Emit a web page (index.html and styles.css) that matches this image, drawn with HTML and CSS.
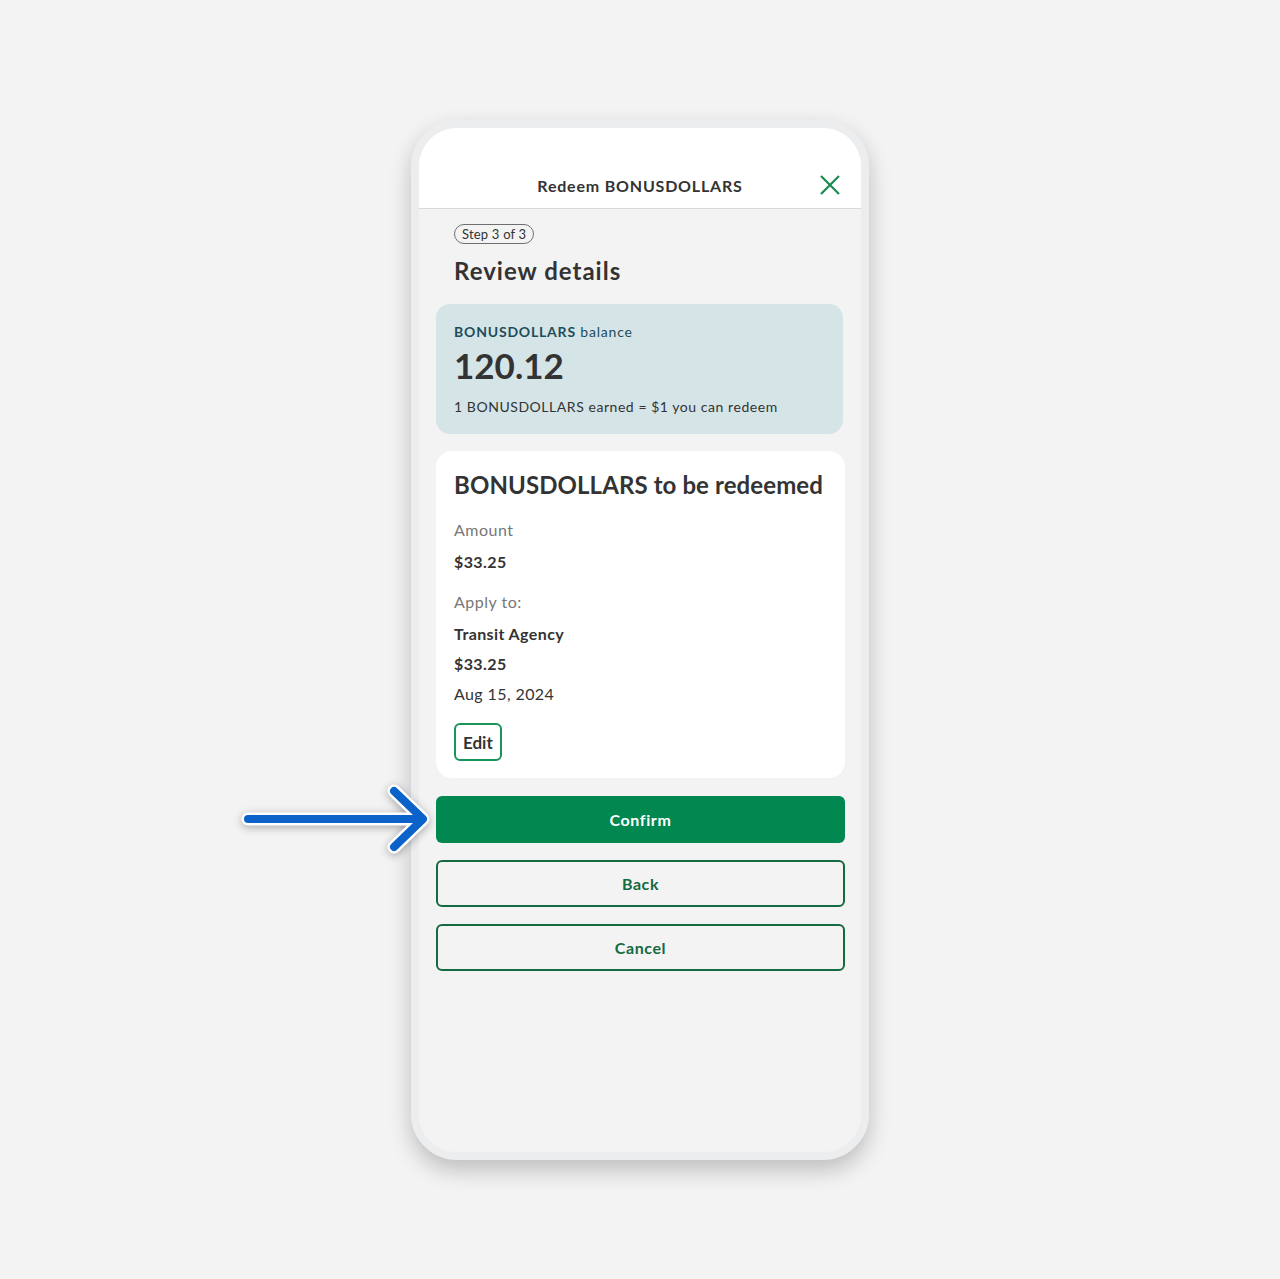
FILE: index.html
```html
<!DOCTYPE html>
<html lang="en">
<head>
    <meta charset="UTF-8">
    <meta name="viewport" content="width=device-width, initial-scale=1.0">
    <title>Redeem BONUSDOLLARS</title>
    <link rel="stylesheet" href="styles.css">
</head>
<body>

<div class="stage">
    <div class="phone">
        <div class="screen">
            <!-- Header -->
            <div class="header">
                <span class="header-title">Redeem BONUSDOLLARS</span>
                <svg class="close" width="22" height="22" viewBox="0 0 22 22">
                    <path d="M2 2 L20 20 M20 2 L2 20" stroke="#1a8a50" stroke-width="2.2" fill="none"/>
                </svg>
            </div>

            <div class="content">
                <div class="step">Step 3 of 3</div>
                <h1 class="title">Review details</h1>

                <!-- Balance -->
                <div class="balance">
                    <div class="balance-label"><b>BONUSDOLLARS</b> balance</div>
                    <div class="balance-value">120.12</div>
                    <div class="balance-note">1 BONUSDOLLARS earned = $1 you can redeem</div>
                </div>

                <!-- Details -->
                <div class="card">
                    <h2 class="card-title">BONUSDOLLARS to be redeemed</h2>
                    <div class="label">Amount</div>
                    <div class="value strong">$33.25</div>
                    <div class="label">Apply to:</div>
                    <div class="value strong">Transit Agency</div>
                    <div class="value strong">$33.25</div>
                    <div class="value">Aug 15, 2024</div>
                    <button class="edit">Edit</button>
                </div>

                <button class="btn btn-primary">Confirm</button>
                <button class="btn btn-outline">Back</button>
                <button class="btn btn-outline">Cancel</button>
            </div>
        </div>

        <!-- Pointer arrow -->
        <svg class="pointer" width="195" height="76" viewBox="0 0 195 76">
            <g fill="none" stroke-linecap="round" stroke-linejoin="round">
                <path d="M8 38 H182 M154 10 L183 38 L154 66" stroke="#ffffff" stroke-width="13"/>
                <path d="M8 38 H182 M154 10 L183 38 L154 66" stroke="#0b62c9" stroke-width="8"/>
            </g>
        </svg>
    </div>
</div>

</body>
</html>
```

FILE: styles.css
```css
body {
    margin: 0;
    background-color: #f3f3f3;
    font-family: Lato, "Open Sans", sans-serif;
    color: #333333;
}
.stage {
    display: flex;
    justify-content: center;
    padding-top: 120px;
    padding-bottom: 119px;
}
.phone {
    position: relative;
    width: 442px;
    height: 1024px;
    border: 8px solid #ecedef;
    border-radius: 46px;
    background-color: #f3f3f3;
    box-shadow: 0 10px 22px rgba(0, 0, 0, 0.22);
}
.screen {
    height: 100%;
    border-radius: 38px;
    overflow: hidden;
    background-color: #f3f3f3;
}
.header {
    height: 80px;
    background-color: #ffffff;
    border-bottom: 1px solid #dadada;
    display: flex;
    align-items: flex-end;
    justify-content: center;
    position: relative;
}
.header-title {
    font-size: 16px;
    font-weight: 700;
    line-height: 20px;
    margin-bottom: 12px;
    letter-spacing: 0.8px;
}
.close {
    position: absolute;
    right: 20px;
    bottom: 12px;
}
.content {
    padding: 15px 16px 0 17px;
    display: flex;
    flex-direction: column;
    align-items: stretch;
}
.step {
    align-self: flex-start;
    margin-left: 18px;
    border: 1px solid #6f6f6f;
    border-radius: 11px;
    padding: 0 7px;
    font-size: 13px;
    line-height: 18px;
    letter-spacing: 0.2px;
}
.title {
    margin: 12px 0 0 18px;
    font-size: 24px;
    line-height: 30px;
    font-weight: 700;
    letter-spacing: 1px;
}
.balance {
    margin-top: 18px;
    margin-right: 2px;
    background-color: #d5e4e7;
    border-radius: 14px;
    padding: 19px 18px 18px;
}
.balance-label {
    font-size: 14px;
    line-height: 18px;
    color: #1d4d5b;
    letter-spacing: 0.8px;
}
.balance-value {
    font-size: 35px;
    font-weight: 700;
    line-height: 44px;
    margin-top: 2px;
}
.balance-note {
    font-size: 14px;
    line-height: 18px;
    margin-top: 11px;
    letter-spacing: 0.55px;
}
.card {
    margin-top: 17px;
    background-color: #ffffff;
    border-radius: 16px;
    padding: 19px 18px 17px;
    display: flex;
    flex-direction: column;
    align-items: flex-start;
}
.card-title {
    margin: 0;
    font-size: 24px;
    line-height: 30px;
    font-weight: 700;
    letter-spacing: 0.1px;
}
.label {
    font-size: 16px;
    line-height: 20px;
    color: #777777;
    margin-top: 20px;
    letter-spacing: 0.5px;
}
.value {
    font-size: 16px;
    line-height: 20px;
    margin-top: 10px;
    letter-spacing: 0.4px;
}
.strong {
    font-weight: 700;
}
.label + .value {
    margin-top: 12px;
}
.edit {
    margin-top: 19px;
    height: 38px;
    padding: 0 7px;
    background-color: #ffffff;
    border: 2px solid #1a9458;
    border-radius: 6px;
    font-family: inherit;
    font-size: 17px;
    font-weight: 700;
    color: #333333;
}
.btn {
    height: 47px;
    border-radius: 6px;
    font-family: inherit;
    font-size: 16px;
    font-weight: 700;
    letter-spacing: 0.6px;
}
.btn-primary {
    margin-top: 18px;
    background-color: #008850;
    border: none;
    color: #ffffff;
}
.btn-outline {
    margin-top: 17px;
    background-color: transparent;
    border: 2px solid #146a41;
    color: #146a41;
}
.pointer {
    position: absolute;
    left: -179px;
    top: 653px;
    filter: drop-shadow(0 2px 4px rgba(0, 0, 0, 0.3));
}
```
